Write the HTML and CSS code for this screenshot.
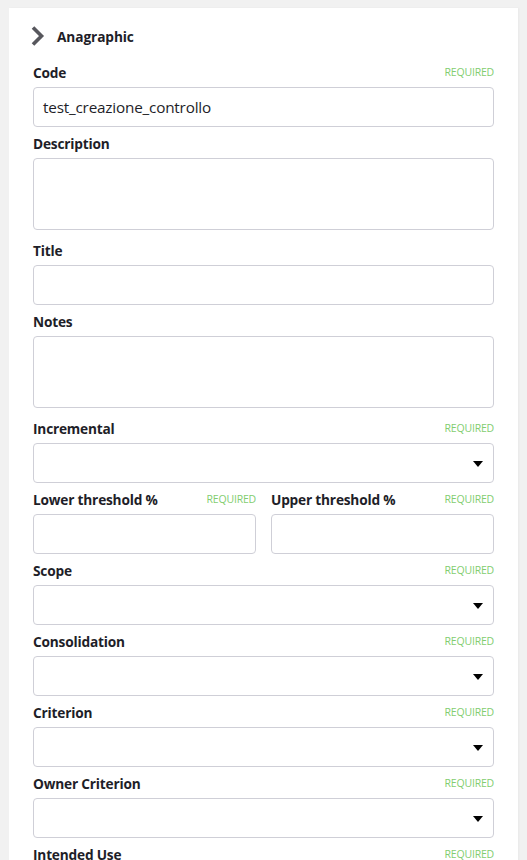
FILE: index.html
```html
<!DOCTYPE html>
<html>
<head>
<meta charset="utf-8">
<link rel="stylesheet" href="styles.css">
</head>
<body>
<div class="card">
  <div class="section-head">
    <svg class="chev" width="14" height="20" viewBox="0 0 14 20"><polyline points="2,1.5 10.5,10 2,18.5" fill="none" stroke="#57575d" stroke-width="3.6"/></svg>
    <span class="section-title">Anagraphic</span>
  </div>

  <div class="field">
    <div class="label-row"><span class="label">Code</span><span class="req">REQUIRED</span></div>
    <div class="input"><span class="value">test_creazione_controllo</span></div>
  </div>

  <div class="field tall">
    <div class="label-row"><span class="label">Description</span></div>
    <div class="input textarea"></div>
  </div>

  <div class="field">
    <div class="label-row"><span class="label">Title</span></div>
    <div class="input"></div>
  </div>

  <div class="field tall">
    <div class="label-row"><span class="label">Notes</span></div>
    <div class="input textarea"></div>
  </div>

  <div class="field">
    <div class="label-row"><span class="label">Incremental</span><span class="req">REQUIRED</span></div>
    <div class="input select"><span class="caret"></span></div>
  </div>

  <div class="field pair">
    <div class="half">
      <div class="label-row"><span class="label">Lower threshold %</span><span class="req">REQUIRED</span></div>
      <div class="input"></div>
    </div>
    <div class="half">
      <div class="label-row"><span class="label">Upper threshold %</span><span class="req">REQUIRED</span></div>
      <div class="input"></div>
    </div>
  </div>

  <div class="field">
    <div class="label-row"><span class="label">Scope</span><span class="req">REQUIRED</span></div>
    <div class="input select"><span class="caret"></span></div>
  </div>

  <div class="field">
    <div class="label-row"><span class="label">Consolidation</span><span class="req">REQUIRED</span></div>
    <div class="input select"><span class="caret"></span></div>
  </div>

  <div class="field">
    <div class="label-row"><span class="label">Criterion</span><span class="req">REQUIRED</span></div>
    <div class="input select"><span class="caret"></span></div>
  </div>

  <div class="field">
    <div class="label-row"><span class="label">Owner Criterion</span><span class="req">REQUIRED</span></div>
    <div class="input select"><span class="caret"></span></div>
  </div>

  <div class="field">
    <div class="label-row"><span class="label">Intended Use</span><span class="req">REQUIRED</span></div>
    <div class="input select"><span class="caret"></span></div>
  </div>
</div>
</body>
</html>
```

FILE: styles.css
```css
html, body {
  margin: 0;
  padding: 0;
  background: #f1f1f1;
}
body {
  padding: 8px 9px 0 9px;
  font-family: "Open Sans", "Noto Sans", sans-serif;
  color: #1e1e28;
}
.card {
  background: #fff;
  padding: 16px 24px 20px 24px;
  box-shadow: 1px 0 2px rgba(0,0,0,0.04);
}
.section-head {
  display: flex;
  align-items: center;
  height: 24px;
  margin-bottom: 15px;
}
.chev {
  margin-left: -2px;
  margin-right: 12px;
}
.section-title {
  font-weight: 700;
  font-size: 13.7px;
  letter-spacing: -0.1px;
}
.field {
  margin-bottom: 7px;
}
.field.tall {
  margin-bottom: 11px;
}
.label-row {
  box-sizing: border-box;
  display: flex;
  justify-content: space-between;
  align-items: center;
  height: 20px;
  padding-bottom: 2px;
  margin-bottom: 4px;
}
.label {
  font-weight: 700;
  font-size: 13.7px;
  letter-spacing: -0.2px;
  color: #1e1e28;
}
.req {
  font-size: 10.5px;
  color: #82cd6f;
  letter-spacing: -0.2px;
}
.input {
  box-sizing: border-box;
  height: 40px;
  border: 1px solid #cfcfd7;
  border-radius: 4px;
  background: #fff;
  display: flex;
  align-items: center;
  padding: 0 9px;
}
.value {
  font-size: 15.3px;
  letter-spacing: -0.2px;
  color: #1e1e28;
}
.textarea {
  height: 72px;
}
.select {
  justify-content: flex-end;
  padding-right: 10px;
}
.caret {
  width: 0;
  height: 0;
  border-left: 5.5px solid transparent;
  border-right: 5.5px solid transparent;
  border-top: 6px solid #000;
  margin-top: 2px;
}
.pair {
  display: flex;
  gap: 15px;
}
.half {
  flex: 1;
}
```
